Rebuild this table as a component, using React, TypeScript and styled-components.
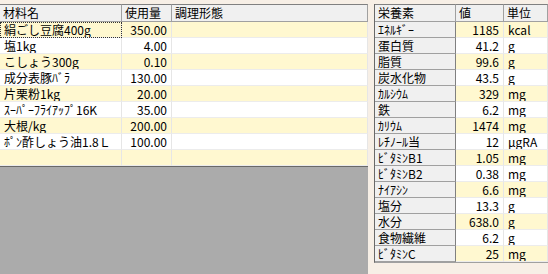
import React from 'react';
import styled, { createGlobalStyle } from 'styled-components';

const GlobalStyle = createGlobalStyle`
  html, body {
    margin: 0;
    padding: 0;
    background: #f7efe6;
    overflow: hidden;
  }
  body {
    font-family: "Noto Sans CJK JP", "DejaVu Sans", sans-serif;
    font-size: 12px;
    color: #000;
  }
`;

const Window = styled.div`
  display: flex;
  width: 548px;
  height: 274px;
  padding-top: 4px;
  box-sizing: border-box;
`;

const LeftPane = styled.div`
  width: 368px;
  display: flex;
  flex-direction: column;
  background: #ababab;
`;

const IngredientGrid = styled.div`
  display: grid;
  grid-template-columns: 122px 50px 1fr;
  background: #fff;
  border-bottom: 1px solid #696969;
`;

const Workspace = styled.div`
  flex: 1;
`;

const RightPane = styled.div`
  margin-left: 6px;
  flex: 1;
  display: flex;
  flex-direction: column;
`;

const NutrientGrid = styled.div`
  display: grid;
  grid-template-columns: 81px 48px 1fr;
  border-left: 1px solid #696969;
  border-bottom: 1px solid #a0a0a0;
  background: #fff;
`;

const HeadCell = styled.div`
  height: 16px;
  line-height: 16px;
  padding-left: 3px;
  background: #f0f0f0;
  border-top: 1px solid #808080;
  border-bottom: 1px solid #a0a0a0;
  border-right: 1px solid #a0a0a0;
  white-space: nowrap;
  overflow: hidden;
`;

const Cell = styled.div<{ $alt: boolean; $num?: boolean; $focus?: boolean }>`
  height: 15px;
  line-height: 15px;
  padding: 0 ${(p) => (p.$num ? '4px' : '0')} 0 ${(p) => (p.$num ? '0' : '4px')};
  text-align: ${(p) => (p.$num ? 'right' : 'left')};
  background: ${(p) => (p.$alt ? '#fff8d0' : '#ffffff')};
  border-bottom: 1px solid #ececec;
  border-right: 1px solid #e6e6e6;
  white-space: nowrap;
  overflow: hidden;
  outline: ${(p) => (p.$focus ? '1px dotted #333' : 'none')};
  outline-offset: -1px;
`;

const RowHead = styled.div`
  height: 15px;
  line-height: 15px;
  padding-left: 3px;
  background: #f0f0f0;
  border-bottom: 1px solid #a0a0a0;
  border-right: 1px solid #808080;
  white-space: nowrap;
  overflow: hidden;
`;

const ingredients: [string, string][] = [
  ['絹ごし豆腐400g', '350.00'],
  ['塩1kg', '4.00'],
  ['こしょう300g', '0.10'],
  ['成分表豚ﾊﾞﾗ', '130.00'],
  ['片栗粉1kg', '20.00'],
  ['ｽｰﾊﾟｰﾌﾗｲｱｯﾌﾟ16K', '35.00'],
  ['大根/kg', '200.00'],
  ['ﾎﾟﾝ酢しょう油1.8Ｌ', '100.00'],
  ['', ''],
];

const nutrients: [string, string, string][] = [
  ['ｴﾈﾙｷﾞｰ', '1185', 'kcal'],
  ['蛋白質', '41.2', 'g'],
  ['脂質', '99.6', 'g'],
  ['炭水化物', '43.5', 'g'],
  ['ｶﾙｼｳﾑ', '329', 'mg'],
  ['鉄', '6.2', 'mg'],
  ['ｶﾘｳﾑ', '1474', 'mg'],
  ['ﾚﾁﾉｰﾙ当', '12', 'μgRA'],
  ['ﾋﾞﾀﾐﾝB1', '1.05', 'mg'],
  ['ﾋﾞﾀﾐﾝB2', '0.38', 'mg'],
  ['ﾅｲｱｼﾝ', '6.6', 'mg'],
  ['塩分', '13.3', 'g'],
  ['水分', '638.0', 'g'],
  ['食物繊維', '6.2', 'g'],
  ['ﾋﾞﾀﾐﾝC', '25', 'mg'],
];

export default function App() {
  return (
    <Window>
      <GlobalStyle />
      <LeftPane>
        <IngredientGrid>
          <HeadCell>材料名</HeadCell>
          <HeadCell>使用量</HeadCell>
          <HeadCell>調理形態</HeadCell>
          {ingredients.map(([name, qty], i) => (
            <React.Fragment key={i}>
              <Cell $alt={i % 2 === 0} $focus={i === 0}>{name}</Cell>
              <Cell $alt={i % 2 === 0} $num>{qty}</Cell>
              <Cell $alt={i % 2 === 0} />
            </React.Fragment>
          ))}
        </IngredientGrid>
        <Workspace />
      </LeftPane>
      <RightPane>
        <NutrientGrid>
          <HeadCell>栄養素</HeadCell>
          <HeadCell>値</HeadCell>
          <HeadCell>単位</HeadCell>
          {nutrients.map(([name, value, unit], i) => (
            <React.Fragment key={name}>
              <RowHead>{name}</RowHead>
              <Cell $alt={i % 2 === 0} $num>{value}</Cell>
              <Cell $alt={i % 2 === 0}>{unit}</Cell>
            </React.Fragment>
          ))}
        </NutrientGrid>
      </RightPane>
    </Window>
  );
}
